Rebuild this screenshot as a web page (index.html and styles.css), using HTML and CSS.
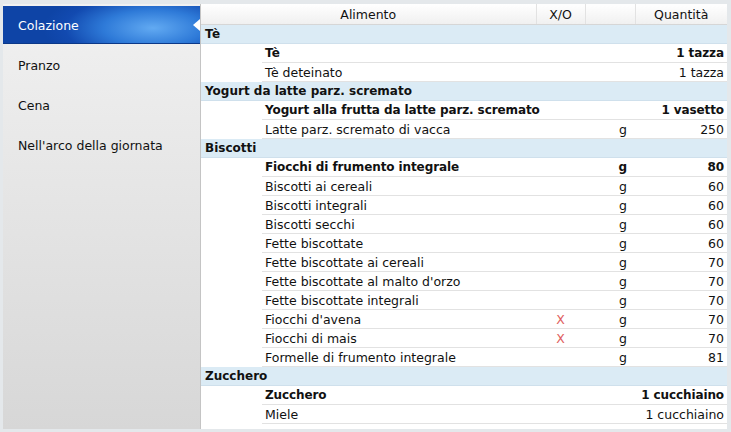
FILE: index.html
```html
<!DOCTYPE html>
<html>

<head>
    <meta charset="UTF-8">
    <link rel="stylesheet" href="styles.css">
</head>

<body>
    <div class="window">
        <ul class="menu">
            <li class="active">Colazione</li>
            <li>Pranzo</li>
            <li>Cena</li>
            <li>Nell'arco della giornata</li>
        </ul>

        <div class="content">
            <table class="foods">
                <colgroup>
                    <col class="c-indent">
                    <col class="c-name">
                    <col class="c-xo">
                    <col class="c-unit">
                    <col>
                </colgroup>
                <thead>
                    <tr>
                        <th colspan="2">Alimento</th>
                        <th>X/O</th>
                        <th></th>
                        <th>Quantità</th>
                    </tr>
                </thead>
                <tbody>
                    <tr class="group"><td colspan="5">Tè</td></tr>
                    <tr class="main"><td class="indent"></td><td>Tè</td><td></td><td></td><td class="num">1 tazza</td></tr>
                    <tr><td class="indent"></td><td>Tè deteinato</td><td></td><td></td><td class="num">1 tazza</td></tr>

                    <tr class="group"><td colspan="5">Yogurt da latte parz. scremato</td></tr>
                    <tr class="main"><td class="indent"></td><td>Yogurt alla frutta da latte parz. scremato</td><td></td><td></td><td class="num">1 vasetto</td></tr>
                    <tr><td class="indent"></td><td>Latte parz. scremato di vacca</td><td></td><td class="u">g</td><td class="num">250</td></tr>

                    <tr class="group"><td colspan="5">Biscotti</td></tr>
                    <tr class="main"><td class="indent"></td><td>Fiocchi di frumento integrale</td><td></td><td class="u">g</td><td class="num">80</td></tr>
                    <tr><td class="indent"></td><td>Biscotti ai cereali</td><td></td><td class="u">g</td><td class="num">60</td></tr>
                    <tr><td class="indent"></td><td>Biscotti integrali</td><td></td><td class="u">g</td><td class="num">60</td></tr>
                    <tr><td class="indent"></td><td>Biscotti secchi</td><td></td><td class="u">g</td><td class="num">60</td></tr>
                    <tr><td class="indent"></td><td>Fette biscottate</td><td></td><td class="u">g</td><td class="num">60</td></tr>
                    <tr><td class="indent"></td><td>Fette biscottate ai cereali</td><td></td><td class="u">g</td><td class="num">70</td></tr>
                    <tr><td class="indent"></td><td>Fette biscottate al malto d'orzo</td><td></td><td class="u">g</td><td class="num">70</td></tr>
                    <tr><td class="indent"></td><td>Fette biscottate integrali</td><td></td><td class="u">g</td><td class="num">70</td></tr>
                    <tr><td class="indent"></td><td>Fiocchi d'avena</td><td class="x">X</td><td class="u">g</td><td class="num">70</td></tr>
                    <tr><td class="indent"></td><td>Fiocchi di mais</td><td class="x">X</td><td class="u">g</td><td class="num">70</td></tr>
                    <tr><td class="indent"></td><td>Formelle di frumento integrale</td><td></td><td class="u">g</td><td class="num">81</td></tr>

                    <tr class="group"><td colspan="5">Zucchero</td></tr>
                    <tr class="main"><td class="indent"></td><td>Zucchero</td><td></td><td></td><td class="num">1 cucchiaino</td></tr>
                    <tr><td class="indent"></td><td>Miele</td><td></td><td></td><td class="num">1 cucchiaino</td></tr>
                </tbody>
            </table>
        </div>
    </div>
</body>

</html>
```

FILE: styles.css
```css
html, body {
    margin: 0;
    padding: 0;
}
body {
    width: 731px;
    height: 432px;
    background: #e4e8eb;
    font-family: "DejaVu Sans", Verdana, sans-serif;
    font-size: 12.5px;
    color: #111;
    overflow: hidden;
}

.window {
    display: flex;
    box-sizing: border-box;
    height: 432px;
    padding: 4px 4px 3px 3px;
}

.menu {
    width: 197px;
    margin: 0;
    padding: 2px 0 0;
    list-style: none;
    background: linear-gradient(#f1f1f1, #d7d7d7);
    border-right: 1px solid #c4c4c4;
}
.menu li {
    position: relative;
    height: 36px;
    margin-bottom: 2px;
    padding: 2px 0 0 15px;
    line-height: 36px;
}
.menu li.active {
    color: #fff;
    background: radial-gradient(ellipse 110px 40px at 150px 22px, #62aaf2 0%, #2e7ad8 45%, #124ab0 80%, #0e44a6 100%);
    border-bottom: 1px solid #0b3888;
    height: 35px;
}
.menu li.active::after {
    content: "";
    position: absolute;
    right: 0;
    top: 13px;
    border: 6px solid transparent;
    border-right: 7px solid #fff;
    border-left: 0;
}

.content {
    flex: 1;
    background: #fff;
    overflow: hidden;
}

.foods {
    width: 100%;
    border-collapse: collapse;
    table-layout: fixed;
}
.foods col.c-indent {
    width: 61px;
}
.foods col.c-name {
    width: 274px;
}
.foods col.c-xo {
    width: 49px;
}
.foods col.c-unit {
    width: 50px;
}
.foods th {
    height: 20px;
    padding: 0;
    font-weight: normal;
    background: linear-gradient(#fff, #f0f0f0);
    border-bottom: 1px solid #d6d6d6;
    border-left: 1px solid #e2e2e2;
    text-align: center;
}
.foods th:first-child {
    border-left: 0;
}
.foods td {
    height: 18px;
    padding: 0 3px;
    border-bottom: 1px solid #e2e2e2;
    white-space: nowrap;
    overflow: visible;
}
.foods td.indent {
    border-bottom: 0;
}
.foods tr.main td,
.foods tr.group td {
    font-weight: bold;
    font-size: 12px;
}
.foods tr.main td {
    letter-spacing: -0.1px;
}
.foods tr.group td {
    padding-left: 4px;
    background: #dbebf5;
    border-bottom: 1px solid #cfe0ec;
}
.foods td.num {
    text-align: right;
}
.foods td.u {
    text-align: right;
    padding-right: 8px;
}
.foods td.x {
    color: #e06060;
    text-align: center;
}
```
